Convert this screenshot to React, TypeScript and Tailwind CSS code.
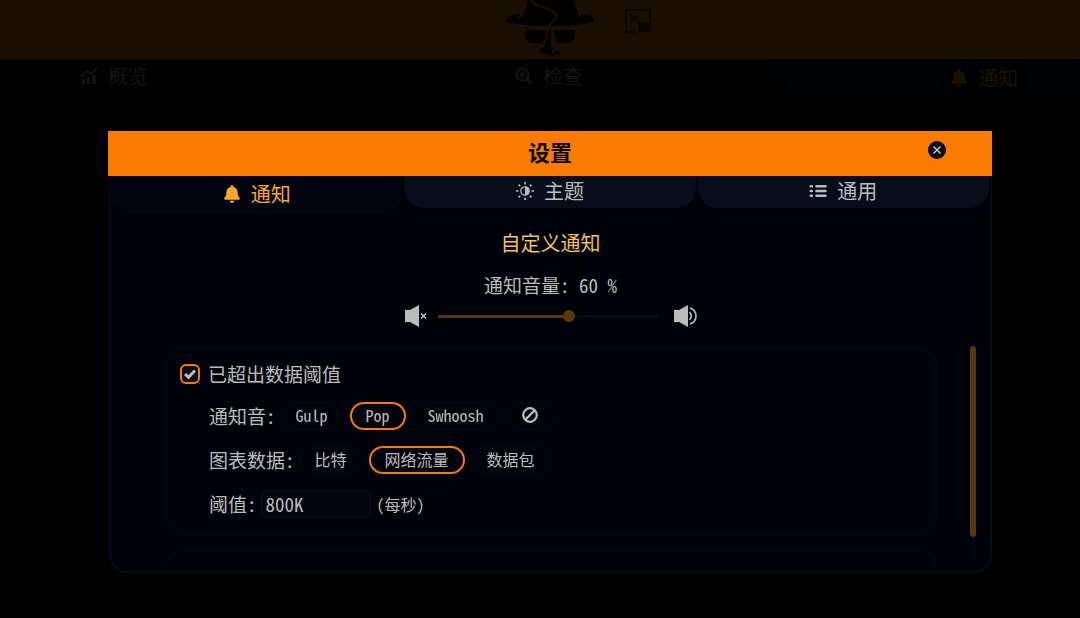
import { useState } from "react";
import type { ReactNode } from "react";
import { FaBell } from "react-icons/fa";

function Logo() {
  return (
    <svg viewBox="0 0 90 56" className="h-14 w-[90px]" aria-hidden="true">
      <path
        fill="#000"
        d="M23 0H68C70 7 73 12 75 18L78 19C77 17 75 15 76 14C82 14 89 17 89 20C88 23 73 26 45 26C17 26 2 23 1 20C1 17 9 14 15 14C15 16 13 17 12 19L17 18C19 13 22 8 23 0Z"
      />
      <path fill="#000" d="M20 30H42C41 36 39 43 35 43H28C21 43 20 38 20 30ZM49 30H70C70 38 69 43 62 43H56C51 43 49 36 49 30Z" />
      <path
        fill="#000"
        d="M44 30H46C46 39 46 46 47 53C49 54 50 51 53 51C55 50 57 52 54 54C52 53 50 56 47 56C44 56 43 53 41 54C38 54 36 53 35 51C36 48 39 48 40 44C42 39 43 35 44 30Z"
      />
      <path fill="none" stroke="#1a0e02" strokeWidth="2.5" d="M26 0C28 5 33 5 38 7C46 10 53 13 51 18C49 22 45 23 43 27" />
    </svg>
  );
}

function PipIcon() {
  return (
    <svg viewBox="0 0 28 26" className="h-[26px] w-7" fill="none" stroke="#0a0603" strokeWidth="2" aria-hidden="true">
      <path d="M12 24H2V2H26V12" />
      <path d="M6 6l6 6M12 7v5H7" />
      <rect x="15" y="15" width="11" height="8" fill="#0a0603" />
    </svg>
  );
}

function InspectIcon() {
  return (
    <svg viewBox="0 0 18 18" className="size-[18px]" fill="none" stroke="currentColor" strokeWidth="2" aria-hidden="true">
      <circle cx="7.500" cy="7.500" r="6" />
      <path strokeWidth="3" d="M12 12l5 5" />
      <path d="M7.500 4.500v6M4.500 7.500h6" />
    </svg>
  );
}

function OverviewIcon() {
  return (
    <svg viewBox="0 0 18 18" className="size-[18px]" fill="currentColor" aria-hidden="true">
      <path d="M2 12h3v5H2zM7 10h3v7H7zM12 8h4v9h-4z" />
      <path d="M1 10l6-6 4 3 6-6" fill="none" stroke="currentColor" strokeWidth="2" />
    </svg>
  );
}

function SunIcon() {
  return (
    <svg viewBox="0 0 18 18" className="size-[18px]" aria-hidden="true">
      <circle cx="9" cy="9" r="4.200" fill="none" stroke="currentColor" strokeWidth="1.300" />
      <path d="M9 4.800a4.200 4.200 0 010 8.400z" fill="currentColor" />
      <path
        d="M9 0v2.500M9 15.500v2.500M0 9h2.500M15.500 9h2.500M2.600 2.600l1.500 1.500M13.900 13.900l1.500 1.500M2.600 15.400l1.500-1.500M13.900 4.100l1.500-1.500"
        stroke="currentColor"
        strokeWidth="1.600"
      />
    </svg>
  );
}

function ListIcon() {
  return (
    <svg viewBox="0 0 18 18" className="size-[18px]" stroke="currentColor" strokeWidth="2.600" strokeLinecap="round" aria-hidden="true">
      <path d="M1.800 4.200h1M1.800 9h1M1.800 13.800h1M7.500 4.200h9M7.500 9h9M7.500 13.800h9" />
    </svg>
  );
}

function CheckIcon() {
  return (
    <svg viewBox="0 0 12 12" className="pointer-events-none absolute size-3" fill="none" stroke="#bcbcbc" strokeWidth="3" aria-hidden="true">
      <path d="M1 6l3.500 3.300L11 2.500" />
    </svg>
  );
}

function NoneIcon() {
  return (
    <svg viewBox="0 0 16 16" className="size-4" fill="none" stroke="currentColor" strokeWidth="2.200" aria-hidden="true">
      <circle cx="8" cy="8" r="6.800" />
      <path d="M3.400 12.600l9.200-9.200" />
    </svg>
  );
}

function MuteIcon() {
  return (
    <svg viewBox="0 0 24 24" className="size-6" fill="currentColor" aria-hidden="true">
      <path d="M1 6h5L15 1v22L6 18H1z" />
      <path d="M17 9.500l5 5M22 9.500l-5 5" stroke="currentColor" strokeWidth="1.600" />
    </svg>
  );
}

function LoudIcon() {
  return (
    <svg viewBox="0 0 24 24" className="size-6" fill="currentColor" aria-hidden="true">
      <path d="M1 6h5L15 1v22L6 18H1z" />
      <path d="M16.500 8q3.500 4 0 8M17 4q6 2 6 8t-6 8" fill="none" stroke="currentColor" strokeWidth="1.600" />
    </svg>
  );
}

function Tab({ active, label, icon, onClick }: { active: boolean; label: string; icon: ReactNode; onClick: () => void }) {
  const look = active ? "h-[38px] bg-[#020510] text-[#fba827]" : "h-8 bg-[#080d1b] text-[#bcbcbc]";
  return (
    <button
      type="button"
      role="tab"
      aria-selected={active}
      onClick={onClick}
      className={`flex items-center justify-center gap-2.5 rounded-b-[20px] pb-0.5 text-xl shadow-[0_2px_4px_#000] ${look}`}
    >
      {icon}
      {label}
    </button>
  );
}

function Pill({ name, label, checked, onPick, children }: { name: string; label: string; checked: boolean; onPick: () => void; children?: ReactNode }) {
  const look = checked ? "border-[#f97b02]" : "border-[#03050f]";
  return (
    <label className={`flex h-7 cursor-pointer items-center rounded-full border-2 bg-[#01030b] px-3.5 pb-0.5 text-base ${look}`}>
      <input type="radio" name={name} aria-label={label} checked={checked} onChange={onPick} className="sr-only" />
      {children ?? label}
    </label>
  );
}

export default function App() {
  const [tab, setTab] = useState(0);
  const [volume, setVolume] = useState(60);
  const [enabled, setEnabled] = useState(true);
  const [sound, setSound] = useState("Pop");
  const [data, setData] = useState("网络流量");
  const [threshold, setThreshold] = useState("800K");

  return (
    <div className="relative min-h-screen overflow-hidden bg-black font-['Noto_Sans_Mono_CJK_SC','Noto_Sans_CJK_SC',monospace] text-[#bcbcbc]">
      <header className="-mr-5 flex h-[59px] justify-center bg-[#1a0e02]">
        <div className="relative">
          <Logo />
          <button type="button" aria-label="画中画" className="absolute top-2 left-[119px]">
            <PipIcon />
          </button>
        </div>
      </header>
      <nav className="-mr-[122px] -ml-[104px] grid grid-cols-3 items-start text-xl text-[#131313]">
        <a href="#overview" className="flex h-[34px] items-center justify-center gap-2.5 rounded-b-[20px] bg-[#010102]">
          <OverviewIcon />
          概览
        </a>
        <a href="#inspect" className="flex h-[34px] items-center justify-center gap-2.5 rounded-b-[20px] bg-[#010102]">
          <InspectIcon />
          检查
        </a>
        <a href="#notifications" className="flex h-[38px] items-center justify-center gap-2.5 rounded-b-[20px] bg-[#000102] text-[#1a1104]">
          <FaBell className="size-[18px]" />
          通知
        </a>
      </nav>

      <section role="dialog" aria-labelledby="settings-title" className="mt-[34px] mr-[88px] ml-[108px]">
        <div className="relative flex h-[45px] items-center justify-center bg-[#fb7b01] pb-1">
          <h1 id="settings-title" className="text-[22px] font-bold text-[#05070d]">设置</h1>
          <button
            type="button"
            aria-label="关闭"
            className="absolute top-2.5 right-[46px] flex size-[18px] items-center justify-center rounded-full bg-[#080d1b] text-[#d0d0d0]"
          >
            <svg viewBox="0 0 8 8" className="size-2" stroke="currentColor" strokeWidth="1.400" aria-hidden="true">
              <path d="M.5.5l7 7M7.500.5l-7 7" />
            </svg>
          </button>
        </div>
        <div className="ml-px rounded-b-[18px] border-2 border-t-0 border-[#060c1b] bg-[#00020a]">
          <div role="tablist" className="grid h-[38px] grid-cols-3 items-start gap-0.5 pr-px">
            <Tab active={tab === 0} label="通知" onClick={() => setTab(0)} icon={<FaBell className="size-[18px]" />} />
            <Tab active={tab === 1} label="主题" onClick={() => setTab(1)} icon={<SunIcon />} />
            <Tab active={tab === 2} label="通用" onClick={() => setTab(2)} icon={<ListIcon />} />
          </div>

          <h2 className="mt-[15px] text-center text-xl leading-7 text-[#f5c04c]">自定义通知</h2>
          <label htmlFor="volume" className="mt-4 block text-center text-[19px] leading-6">
            通知音量: {volume} %
          </label>
          <div className="mt-[7px] flex h-6 items-center justify-center gap-2.5">
            <MuteIcon />
            <input
              id="volume"
              type="range"
              min={0}
              max={100}
              value={volume}
              onChange={(e) => setVolume(Number(e.target.value))}
              style={{ backgroundImage: `linear-gradient(to right, #5b380c ${volume}%, #060b18 ${volume}%)` }}
              className="h-[3px] w-[221px] appearance-none rounded-full [&::-webkit-slider-thumb]:size-3 [&::-webkit-slider-thumb]:appearance-none [&::-webkit-slider-thumb]:rounded-full [&::-webkit-slider-thumb]:bg-[#5b380c]"
            />
            <span className="ml-1">
              <LoudIcon />
            </span>
          </div>

          <div className="mt-[18px] mb-1 flex h-[221px] justify-between pr-3.5 pl-[53px]">
            <div className="mr-8 flex-1 overflow-hidden">
              <fieldset className="rounded-[20px] border-4 border-[#03040f] bg-[#01030b] px-3 pt-2 pb-3.5">
                <label className="flex h-8 items-center gap-2 text-[19px]">
                  <span className="relative flex size-5 items-center justify-center">
                    <input
                      type="checkbox"
                      checked={enabled}
                      onChange={(e) => setEnabled(e.target.checked)}
                      className="size-5 appearance-none rounded-md border-2 border-[#f97b02] bg-[#080d1b]"
                    />
                    {enabled && <CheckIcon />}
                  </span>
                  已超出数据阈值
                </label>
                <div className="mt-3 flex flex-col gap-4 pl-[29px]">
                  <div role="radiogroup" aria-label="通知音" className="flex h-7 items-center text-[19px]">
                    <span className="mr-1">通知音:</span>
                    <div className="flex gap-1.5">
                      <Pill name="sound" label="Gulp" checked={sound === "Gulp"} onPick={() => setSound("Gulp")} />
                      <Pill name="sound" label="Pop" checked={sound === "Pop"} onPick={() => setSound("Pop")} />
                      <Pill name="sound" label="Swhoosh" checked={sound === "Swhoosh"} onPick={() => setSound("Swhoosh")} />
                      <Pill name="sound" label="无" checked={sound === "无"} onPick={() => setSound("无")}>
                        <NoneIcon />
                      </Pill>
                    </div>
                  </div>
                  <div role="radiogroup" aria-label="图表数据" className="flex h-7 items-center text-[19px]">
                    <span className="mr-1">图表数据:</span>
                    <div className="flex gap-1.5">
                      <Pill name="data" label="比特" checked={data === "比特"} onPick={() => setData("比特")} />
                      <Pill name="data" label="网络流量" checked={data === "网络流量"} onPick={() => setData("网络流量")} />
                      <Pill name="data" label="数据包" checked={data === "数据包"} onPick={() => setData("数据包")} />
                    </div>
                  </div>
                  <div className="flex h-7 items-center text-[19px]">
                    <label htmlFor="threshold" className="mr-1">阈值:</label>
                    <input
                      id="threshold"
                      value={threshold}
                      onChange={(e) => setThreshold(e.target.value)}
                      className="h-7 w-[110px] rounded-md border-2 border-[#050b18] bg-[#01040d] px-[3px]"
                    />
                    <span className="ml-1.5 text-base">(每秒)</span>
                  </div>
                </div>
              </fieldset>
              <div className="mt-3 h-20 rounded-[20px] border-4 border-[#03040f] bg-[#01030b]" />
            </div>
            <div className="w-1.5 rounded-full bg-[#02040d]">
              <div className="h-[191px] rounded-full bg-[#5b380c]" />
            </div>
          </div>
        </div>
      </section>
    </div>
  );
}
